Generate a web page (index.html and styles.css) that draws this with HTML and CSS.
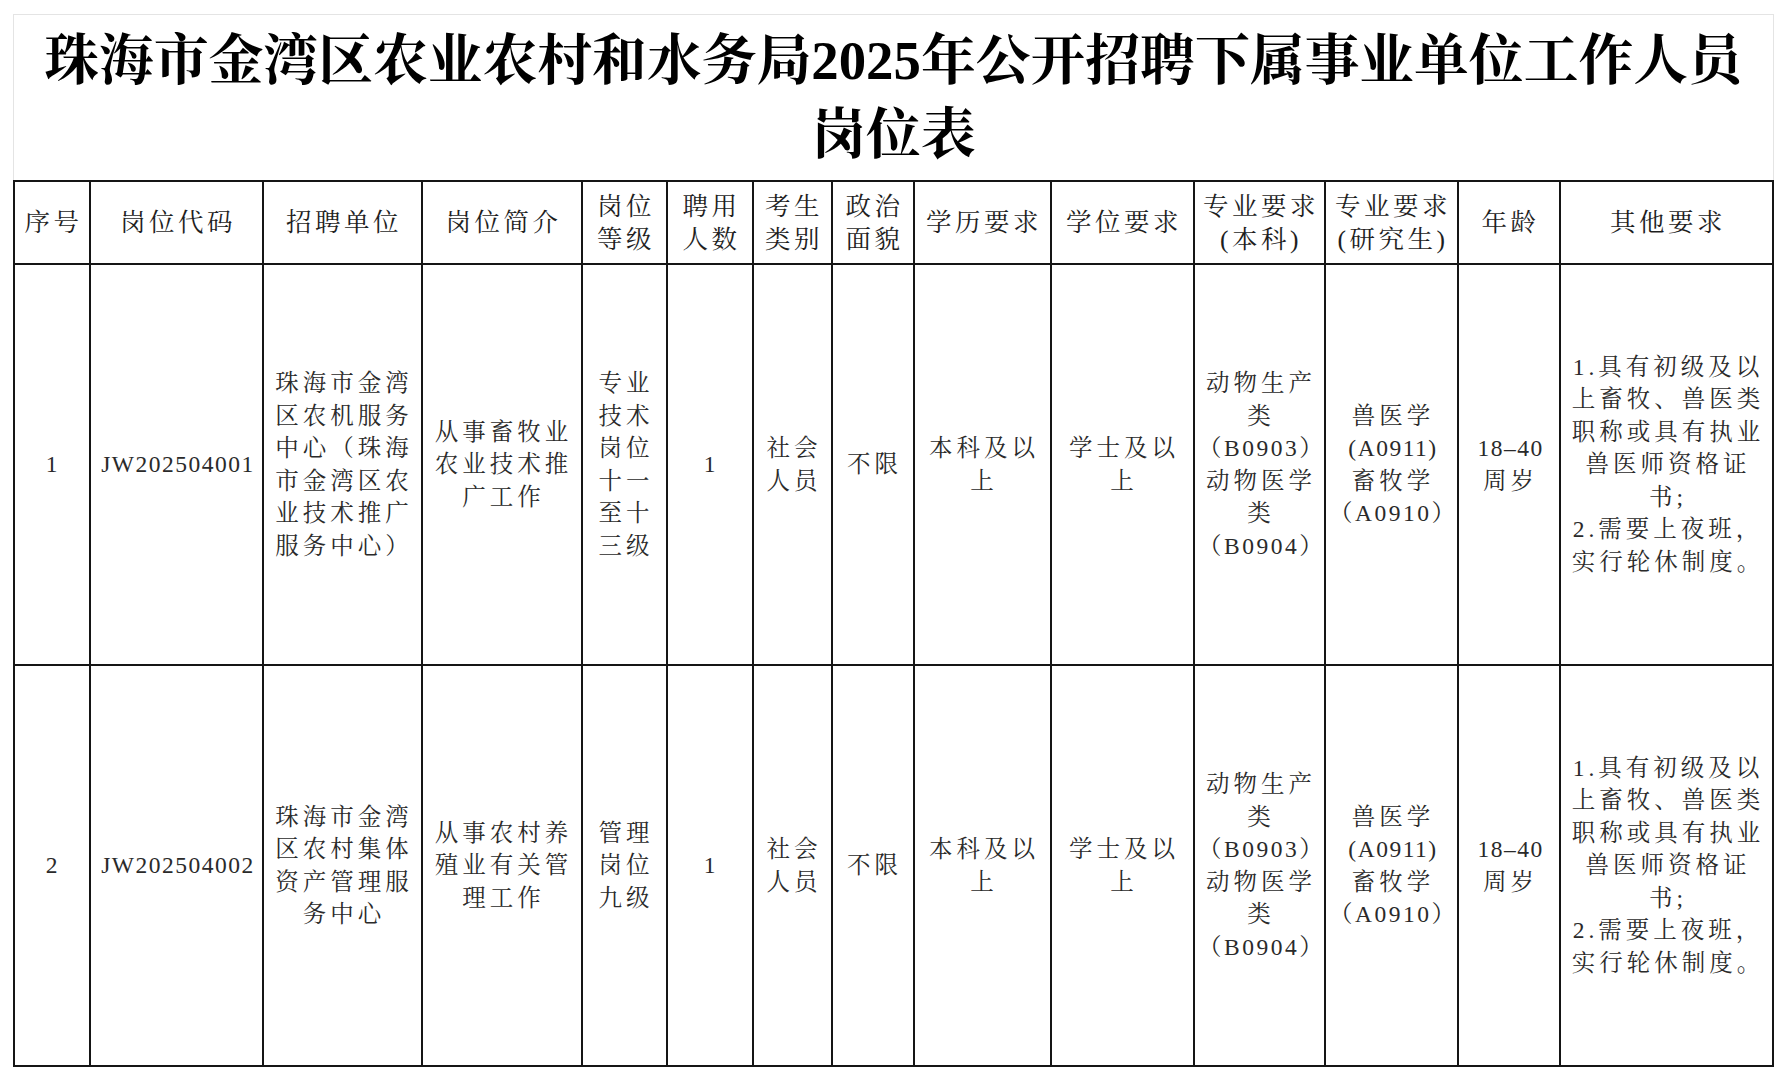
FILE: index.html
```html
<!DOCTYPE html>
<html lang="zh-CN">
<head>
<meta charset="utf-8">
<title>岗位表</title>
<link rel="stylesheet" href="styles.css">
</head>
<body>
<div class="page">
  <div class="title-box">
    <h1 class="title">珠海市金湾区农业农村和水务局2025年公开招聘下属事业单位工作人员<br>岗位表</h1>
  </div>
  <table class="jobs">
    <colgroup>
      <col class="c1"><col class="c2"><col class="c3"><col class="c4"><col class="c5"><col class="c6"><col class="c7"><col class="c8"><col class="c9"><col class="c10"><col class="c11"><col class="c12"><col class="c13"><col class="c14">
    </colgroup>
    <thead>
      <tr class="head">
        <th>序号</th>
        <th>岗位代码</th>
        <th>招聘单位</th>
        <th>岗位简介</th>
        <th>岗位<br>等级</th>
        <th>聘用<br>人数</th>
        <th>考生<br>类别</th>
        <th>政治<br>面貌</th>
        <th>学历要求</th>
        <th>学位要求</th>
        <th>专业要求<br>(本科)</th>
        <th>专业要求<br>(研究生)</th>
        <th>年龄</th>
        <th>其他要求</th>
      </tr>
    </thead>
    <tbody>
      <tr class="row">
        <td>1</td>
        <td><span class="code">JW202504001</span></td>
        <td>珠海市金湾<br>区农机服务<br>中心（珠海<br>市金湾区农<br>业技术推广<br>服务中心）</td>
        <td>从事畜牧业<br>农业技术推<br>广工作</td>
        <td>专业<br>技术<br>岗位<br>十一<br>至十<br>三级</td>
        <td>1</td>
        <td>社会<br>人员</td>
        <td>不限</td>
        <td>本科及以<br>上</td>
        <td>学士及以<br>上</td>
        <td>动物生产<br>类<br><span class="pcode">（B0903）</span><br>动物医学<br>类<br><span class="pcode">（B0904）</span></td>
        <td>兽医学<br><span class="code">(A0911)</span><br>畜牧学<br><span class="pcode">（A0910）</span></td>
        <td><span class="code">18–40</span><br>周岁</td>
        <td>1.具有初级及以<br>上畜牧、兽医类<br>职称或具有执业<br>兽医师资格证<br>书;<br>2.需要上夜班，<br>实行轮休制度。</td>
      </tr>
      <tr class="row">
        <td>2</td>
        <td><span class="code">JW202504002</span></td>
        <td>珠海市金湾<br>区农村集体<br>资产管理服<br>务中心</td>
        <td>从事农村养<br>殖业有关管<br>理工作</td>
        <td>管理<br>岗位<br>九级</td>
        <td>1</td>
        <td>社会<br>人员</td>
        <td>不限</td>
        <td>本科及以<br>上</td>
        <td>学士及以<br>上</td>
        <td>动物生产<br>类<br><span class="pcode">（B0903）</span><br>动物医学<br>类<br><span class="pcode">（B0904）</span></td>
        <td>兽医学<br><span class="code">(A0911)</span><br>畜牧学<br><span class="pcode">（A0910）</span></td>
        <td><span class="code">18–40</span><br>周岁</td>
        <td>1.具有初级及以<br>上畜牧、兽医类<br>职称或具有执业<br>兽医师资格证<br>书;<br>2.需要上夜班，<br>实行轮休制度。</td>
      </tr>
    </tbody>
  </table>
</div>
</body>
</html>
```

FILE: styles.css
```css
html, body {
  margin: 0;
  padding: 0;
  background: #ffffff;
}

.page {
  padding: 14px 0 0 13px;
  width: 1761px;
}

.title-box {
  border: 1px solid #e4e4e4;
  border-bottom: none;
  padding: 9px 0 8px 0;
}

.title {
  margin: 0;
  text-align: center;
  font-family: "Liberation Serif", "Noto Serif CJK SC", "Noto Sans CJK SC", serif;
  font-weight: 700;
  font-size: 54.8px;
  line-height: 74px;
  color: #000000;
}

.jobs {
  border-collapse: collapse;
  table-layout: fixed;
  width: 1761px;
  font-family: "Liberation Serif", "Noto Serif CJK SC", "Noto Sans CJK SC", serif;
  color: #2a2a2a;
}

.c1 { width: 76px; }
.c2 { width: 173px; }
.c3 { width: 159px; }
.c4 { width: 160px; }
.c5 { width: 85px; }
.c6 { width: 86px; }
.c7 { width: 79px; }
.c8 { width: 82px; }
.c9 { width: 137px; }
.c10 { width: 143px; }
.c11 { width: 131px; }
.c12 { width: 133px; }
.c13 { width: 102px; }
.c14 { width: 213px; }

.jobs th,
.jobs td {
  border: 2px solid #151515;
  text-align: center;
  vertical-align: middle;
  padding: 0 0 0 3px;
  white-space: nowrap;
}

.jobs th {
  font-weight: 400;
  font-size: 25.5px;
  line-height: 33px;
  letter-spacing: 3.5px;
  color: #1e1e1e;
}

.head {
  height: 83px;
}

.jobs td {
  font-size: 23.5px;
  line-height: 32.5px;
  letter-spacing: 4px;
}

.code {
  letter-spacing: 1.5px;
}

.pcode {
  letter-spacing: 2.5px;
}

.row {
  height: 401px;
}
```
